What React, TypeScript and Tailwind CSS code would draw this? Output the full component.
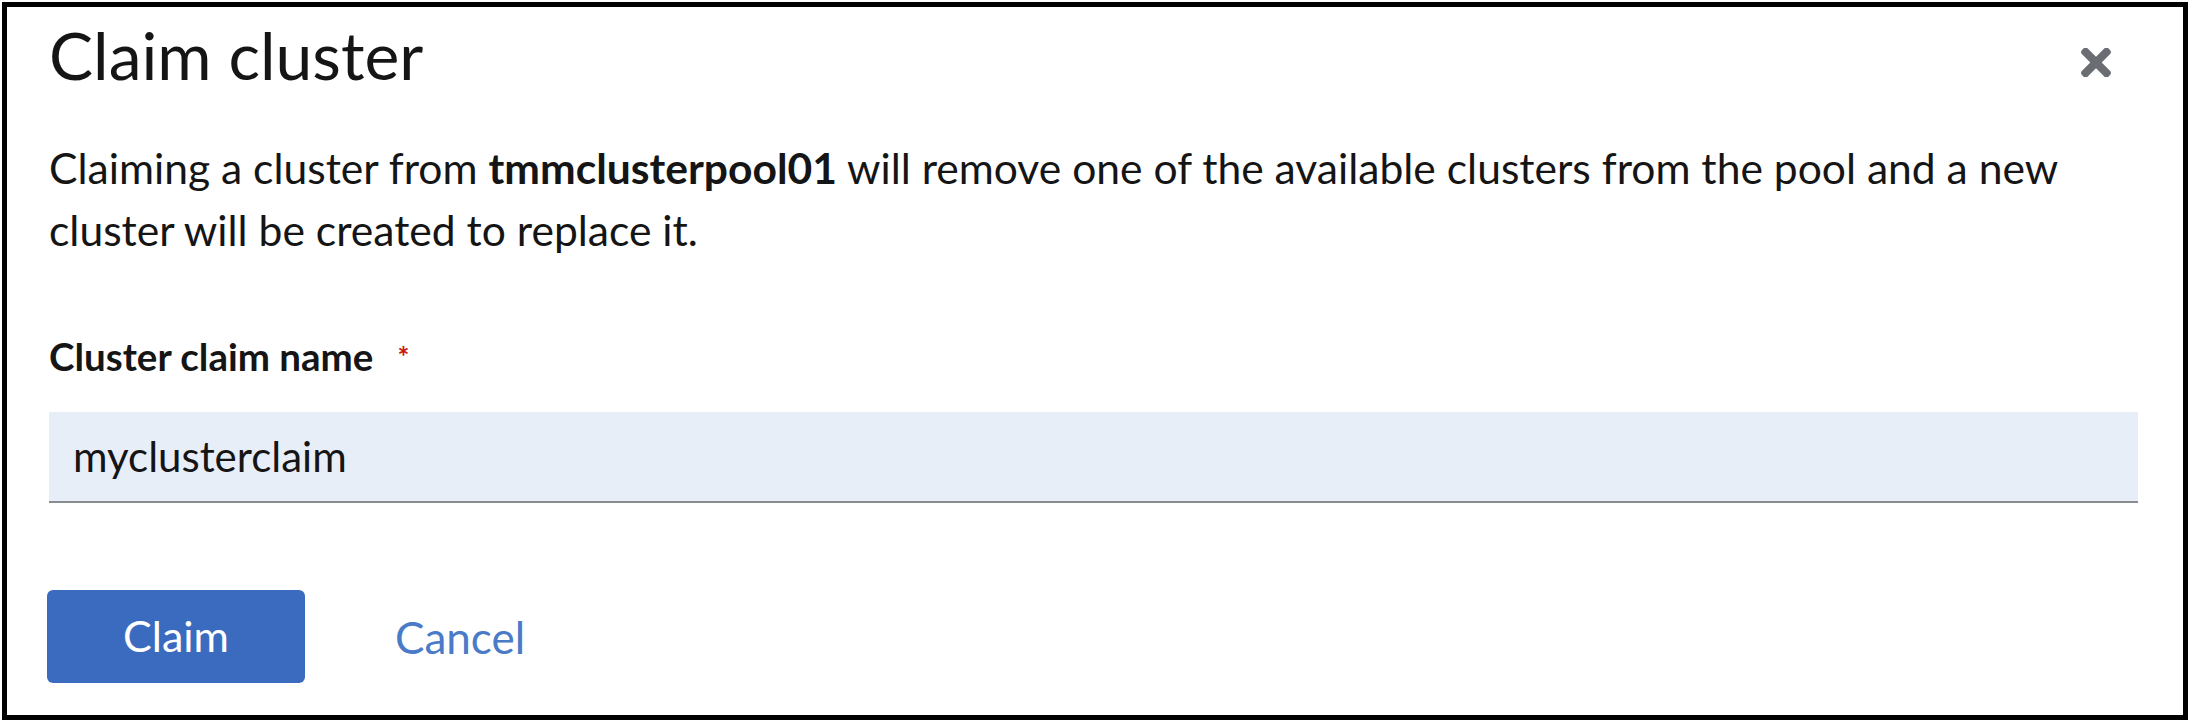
import React from "react";

export default function App() {
  const font = { fontFamily: '"Lato", "Liberation Sans", sans-serif' };

  return (
    <div className="w-[2188px] h-[722px] bg-white pl-[2px] pt-[2px] pb-[2px]" style={font}>
      <div className="h-full border-[5px] border-black pl-[42px] pr-[45px] flex flex-col">
        {/* header */}
        <div className="flex items-start justify-between pt-[15px]">
          <h1 className="text-[66px] leading-[66px] font-normal text-[#151515]">Claim cluster</h1>
          <button className="mt-[26px] mr-[27px] text-[#6a6e73]" aria-label="Close">
            <svg width="30" height="29" viewBox="0 89 352 334" fill="currentColor">
              <path d="M242.72 256l100.07-100.07c12.28-12.28 12.28-32.19 0-44.48l-22.24-22.24c-12.28-12.28-32.19-12.28-44.48 0L176 189.28 75.93 89.21c-12.28-12.28-32.19-12.28-44.48 0L9.21 111.45c-12.28 12.28-12.28 32.19 0 44.48L109.28 256 9.21 356.07c-12.28 12.28-12.28 32.19 0 44.48l22.24 22.24c12.28 12.28 32.2 12.28 44.48 0L176 322.72l100.07 100.07c12.28 12.28 32.2 12.28 44.48 0l22.24-22.24c12.28-12.28 12.28-32.19 0-44.48L242.72 256z" />
            </svg>
          </button>
        </div>

        {/* body */}
        <p className="mt-[49px] text-[42.6px] leading-[62px] text-[#151515]">
          Claiming a cluster from <span className="font-bold">tmmclusterpool01</span> will remove one of the
          available clusters from the pool and a new cluster will be created to replace it.
        </p>

        <label className="mt-[73px] flex items-center text-[38.5px] leading-[44px] font-bold text-[#151515]">
          Cluster claim name
          <span className="ml-[24px] text-[#c9190b] text-[28px] font-bold">*</span>
        </label>

        <div className="mt-[34px] h-[91px] bg-[#e8eef8] border-b-2 border-[#8a8d90] flex items-center pl-[24px]">
          <span className="text-[42px] text-[#151515]">myclusterclaim</span>
        </div>

        {/* footer */}
        <div className="mt-[87px] -ml-[2px] flex items-center">
          <button className="w-[258px] h-[93px] rounded-[6px] bg-[#3b6bbf] text-white text-[43px]">Claim</button>
          <button className="ml-[90px] text-[44px] text-[#4a7bc8]">Cancel</button>
        </div>
      </div>
    </div>
  );
}
